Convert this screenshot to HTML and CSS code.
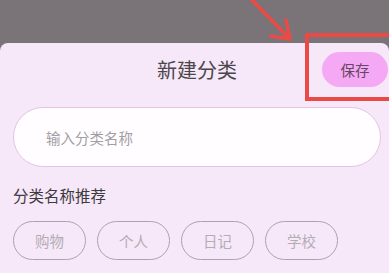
FILE: index.html
```html
<!DOCTYPE html>
<html lang="zh-CN">
<head>
<meta charset="utf-8">
<title>新建分类</title>
<link rel="stylesheet" href="styles.css">
</head>
<body>
<div class="screen">
  <div class="sheet">
    <div class="header">
      <span class="spacer"></span>
      <h1 class="title">新建分类</h1>
      <button class="save">保存</button>
    </div>
    <div class="input">输入分类名称</div>
    <div class="label">分类名称推荐</div>
    <div class="chips">
      <span class="chip">购物</span>
      <span class="chip">个人</span>
      <span class="chip">日记</span>
      <span class="chip">学校</span>
    </div>
  </div>
  <div class="highlight"></div>
  <svg class="arrow" width="389" height="60" viewBox="0 0 389 60">
    <g fill="none" stroke="#ec4a45" stroke-width="3.5" stroke-linecap="round" stroke-linejoin="round">
      <path d="M248 -4 L289 38"/>
      <path d="M286 20 L290 39 L271 36"/>
    </g>
  </svg>
</div>
</body>
</html>
```

FILE: styles.css
```css
html, body {
  margin: 0;
  padding: 0;
}
body {
  width: 389px;
  height: 273px;
  overflow: hidden;
  background: #7a7478;
  font-family: "Noto Sans CJK SC", "Noto Sans", sans-serif;
}
.screen {
  position: relative;
  width: 389px;
  height: 273px;
  padding-top: 43px;
  box-sizing: border-box;
}
.sheet {
  background: #f6e8f9;
  border-radius: 8px 8px 0 0;
  height: 230px;
  padding: 9px 8px 0 13px;
  box-sizing: border-box;
}
.header {
  display: grid;
  grid-template-columns: 1fr auto 1fr;
  align-items: center;
  height: 35px;
  margin-right: -7px;
}
.title {
  margin: 0;
  font-size: 20px;
  font-weight: 400;
  color: #4a464a;
  padding-right: 7px;
}
.save {
  justify-self: end;
  width: 66px;
  height: 35px;
  border: none;
  border-radius: 18px;
  background: #f5a8f4;
  color: #654763;
  font-family: inherit;
  font-size: 14.5px;
  padding: 0;
}
.input {
  margin-top: 20px;
  height: 60px;
  box-sizing: border-box;
  border: 1px solid #e6c3e2;
  border-radius: 30px;
  background: #fffdff;
  display: flex;
  align-items: center;
  padding-left: 32px;
  font-size: 14.5px;
  color: #a39ea3;
}
.label {
  margin-top: 17px;
  font-size: 15.5px;
  line-height: 22px;
  color: #3e3a3e;
}
.chips {
  display: flex;
  gap: 11px;
  margin-top: 15px;
}
.chip {
  width: 73px;
  height: 39px;
  box-sizing: border-box;
  border: 1px solid #ada3ad;
  border-radius: 20px;
  display: flex;
  align-items: center;
  justify-content: center;
  font-size: 14.5px;
  color: #b3adb3;
}
.highlight {
  position: absolute;
  left: 305px;
  top: 33px;
  width: 100px;
  height: 68px;
  box-sizing: border-box;
  border: 4px solid #e94a45;
}
.arrow {
  position: absolute;
  left: 0;
  top: 0;
}
```
